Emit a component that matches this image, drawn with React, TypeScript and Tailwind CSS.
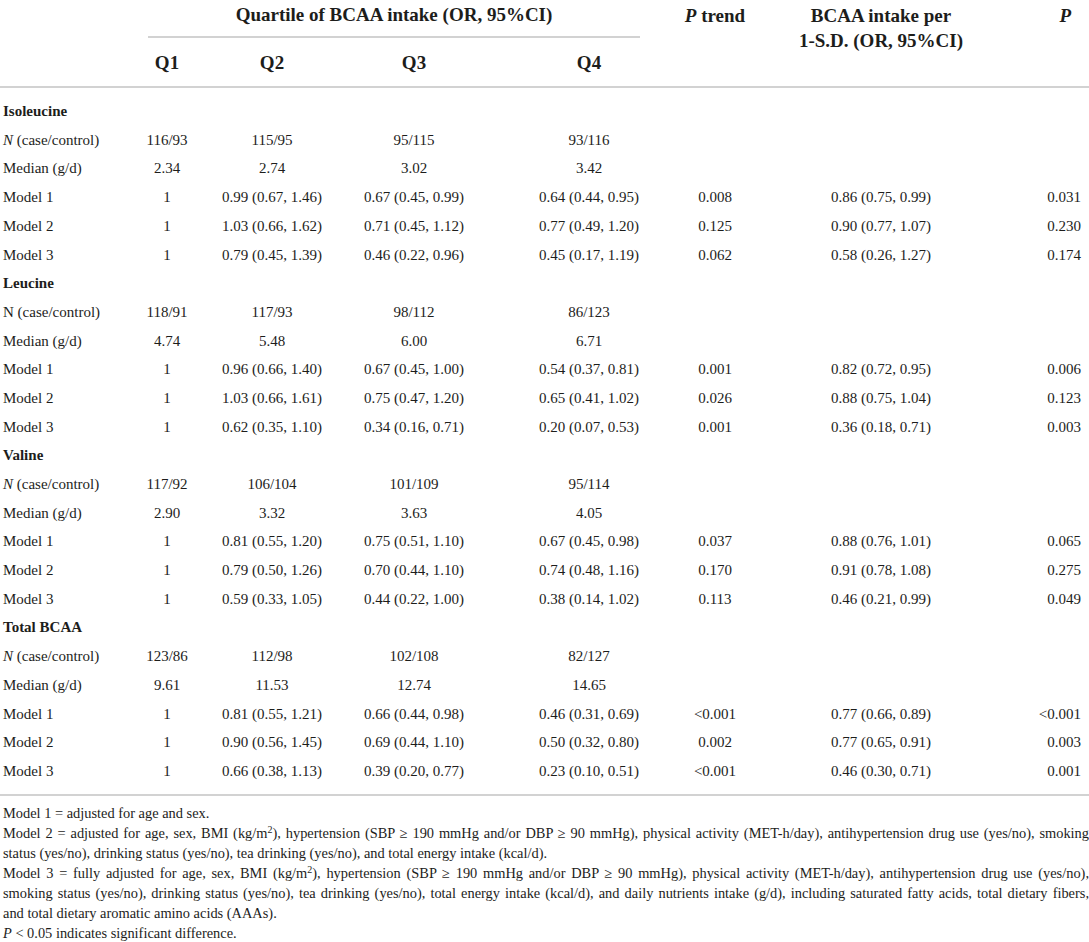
import React from 'react';

// column template shared by header and body rows
const COLS = 'grid grid-cols-[120px_94px_116px_168px_182px_70px_262px_77px]';

type Row = { label: React.ReactNode; cells: string[] };
type Group = { name: string; rows: Row[] };

const NItalic = () => (
    <span>
        <i>N</i> (case/control)
    </span>
);

const GROUPS: Group[] = [
    {
        name: 'Isoleucine',
        rows: [
            { label: <NItalic />, cells: ['116/93', '115/95', '95/115', '93/116', '', '', ''] },
            { label: 'Median (g/d)', cells: ['2.34', '2.74', '3.02', '3.42', '', '', ''] },
            { label: 'Model 1', cells: ['1', '0.99 (0.67, 1.46)', '0.67 (0.45, 0.99)', '0.64 (0.44, 0.95)', '0.008', '0.86 (0.75, 0.99)', '0.031'] },
            { label: 'Model 2', cells: ['1', '1.03 (0.66, 1.62)', '0.71 (0.45, 1.12)', '0.77 (0.49, 1.20)', '0.125', '0.90 (0.77, 1.07)', '0.230'] },
            { label: 'Model 3', cells: ['1', '0.79 (0.45, 1.39)', '0.46 (0.22, 0.96)', '0.45 (0.17, 1.19)', '0.062', '0.58 (0.26, 1.27)', '0.174'] },
        ],
    },
    {
        name: 'Leucine',
        rows: [
            { label: 'N (case/control)', cells: ['118/91', '117/93', '98/112', '86/123', '', '', ''] },
            { label: 'Median (g/d)', cells: ['4.74', '5.48', '6.00', '6.71', '', '', ''] },
            { label: 'Model 1', cells: ['1', '0.96 (0.66, 1.40)', '0.67 (0.45, 1.00)', '0.54 (0.37, 0.81)', '0.001', '0.82 (0.72, 0.95)', '0.006'] },
            { label: 'Model 2', cells: ['1', '1.03 (0.66, 1.61)', '0.75 (0.47, 1.20)', '0.65 (0.41, 1.02)', '0.026', '0.88 (0.75, 1.04)', '0.123'] },
            { label: 'Model 3', cells: ['1', '0.62 (0.35, 1.10)', '0.34 (0.16, 0.71)', '0.20 (0.07, 0.53)', '0.001', '0.36 (0.18, 0.71)', '0.003'] },
        ],
    },
    {
        name: 'Valine',
        rows: [
            { label: <NItalic />, cells: ['117/92', '106/104', '101/109', '95/114', '', '', ''] },
            { label: 'Median (g/d)', cells: ['2.90', '3.32', '3.63', '4.05', '', '', ''] },
            { label: 'Model 1', cells: ['1', '0.81 (0.55, 1.20)', '0.75 (0.51, 1.10)', '0.67 (0.45, 0.98)', '0.037', '0.88 (0.76, 1.01)', '0.065'] },
            { label: 'Model 2', cells: ['1', '0.79 (0.50, 1.26)', '0.70 (0.44, 1.10)', '0.74 (0.48, 1.16)', '0.170', '0.91 (0.78, 1.08)', '0.275'] },
            { label: 'Model 3', cells: ['1', '0.59 (0.33, 1.05)', '0.44 (0.22, 1.00)', '0.38 (0.14, 1.02)', '0.113', '0.46 (0.21, 0.99)', '0.049'] },
        ],
    },
    {
        name: 'Total BCAA',
        rows: [
            { label: <NItalic />, cells: ['123/86', '112/98', '102/108', '82/127', '', '', ''] },
            { label: 'Median (g/d)', cells: ['9.61', '11.53', '12.74', '14.65', '', '', ''] },
            { label: 'Model 1', cells: ['1', '0.81 (0.55, 1.21)', '0.66 (0.44, 0.98)', '0.46 (0.31, 0.69)', '<0.001', '0.77 (0.66, 0.89)', '<0.001'] },
            { label: 'Model 2', cells: ['1', '0.90 (0.56, 1.45)', '0.69 (0.44, 1.10)', '0.50 (0.32, 0.80)', '0.002', '0.77 (0.65, 0.91)', '0.003'] },
            { label: 'Model 3', cells: ['1', '0.66 (0.38, 1.13)', '0.39 (0.20, 0.77)', '0.23 (0.10, 0.51)', '<0.001', '0.46 (0.30, 0.71)', '0.001'] },
        ],
    },
];

// single footnote line stretched to the full width
const Justified = ({ children }: { children: React.ReactNode }) => (
    <div className="whitespace-nowrap text-justify [text-align-last:justify]">{children}</div>
);

export default function App() {
    return (
        <div className="w-[1089px] bg-white text-[#1d1d1b] font-['Liberation_Serif',serif]">
            {/* --- Header --- */}
            <div className={`${COLS} grid-rows-[38px_48px] border-b-2 border-[#d2d2d2] text-[19px] font-bold leading-[25px]`}>
                <div className="col-start-2 col-span-4 row-start-1 pl-[28px] pr-[40px]">
                    <div className="h-full border-b-2 border-[#d2d2d2] pt-[2px] text-center whitespace-nowrap">
                        Quartile of BCAA intake (OR, 95%CI)
                    </div>
                </div>
                <div className="col-start-6 row-start-1 row-span-2 pt-[3px] text-center whitespace-nowrap">
                    <i>P</i> trend
                </div>
                <div className="col-start-7 row-start-1 row-span-2 pt-[3px] text-center">
                    BCAA intake per
                    <br />
                    1-S.D. (OR, 95%CI)
                </div>
                <div className="col-start-8 row-start-1 row-span-2 pt-[3px] pr-[18px] text-right">
                    <i>P</i>
                </div>
                <div className="col-start-2 row-start-2 flex items-center justify-center">Q1</div>
                <div className="col-start-3 row-start-2 flex items-center justify-center">Q2</div>
                <div className="col-start-4 row-start-2 flex items-center justify-center">Q3</div>
                <div className="col-start-5 row-start-2 flex items-center justify-center">Q4</div>
            </div>

            {/* --- Body --- */}
            <div className="pt-[9px] pb-[8px] border-b-2 border-[#d2d2d2] text-[15px]">
                {GROUPS.map(group => (
                    <div key={group.name}>
                        <div className="h-[28.7px] flex items-center pl-[3px] font-bold">{group.name}</div>
                        {group.rows.map((row, i) => (
                            <div key={i} className={`${COLS} h-[28.7px] items-center`}>
                                <div className="pl-[3px] whitespace-nowrap">{row.label}</div>
                                {row.cells.map((c, j) => (
                                    <div key={j} className={j === 6 ? 'text-right pr-[8px]' : 'text-center whitespace-nowrap'}>
                                        {c}
                                    </div>
                                ))}
                            </div>
                        ))}
                    </div>
                ))}
            </div>

            {/* --- Footnotes --- */}
            <div className="pt-[7px] pl-[3px] text-[14.4px] leading-[20px]">
                <div>Model 1 = adjusted for age and sex.</div>
                <Justified>
                    Model 2 = adjusted for age, sex, BMI (kg/m<sup className="text-[10px]">2</sup>), hypertension (SBP ≥ 190 mmHg and/or DBP ≥ 90 mmHg), physical activity (MET-h/day), antihypertension drug use (yes/no), smoking
                </Justified>
                <div>status (yes/no), drinking status (yes/no), tea drinking (yes/no), and total energy intake (kcal/d).</div>
                <Justified>
                    Model 3 = fully adjusted for age, sex, BMI (kg/m<sup className="text-[10px]">2</sup>), hypertension (SBP ≥ 190 mmHg and/or DBP ≥ 90 mmHg), physical activity (MET-h/day), antihypertension drug use (yes/no),
                </Justified>
                <Justified>
                    smoking status (yes/no), drinking status (yes/no), tea drinking (yes/no), total energy intake (kcal/d), and daily nutrients intake (g/d), including saturated fatty acids, total dietary fibers,
                </Justified>
                <div>and total dietary aromatic amino acids (AAAs).</div>
                <div>
                    <i>P</i> &lt; 0.05 indicates significant difference.
                </div>
            </div>
        </div>
    );
}
